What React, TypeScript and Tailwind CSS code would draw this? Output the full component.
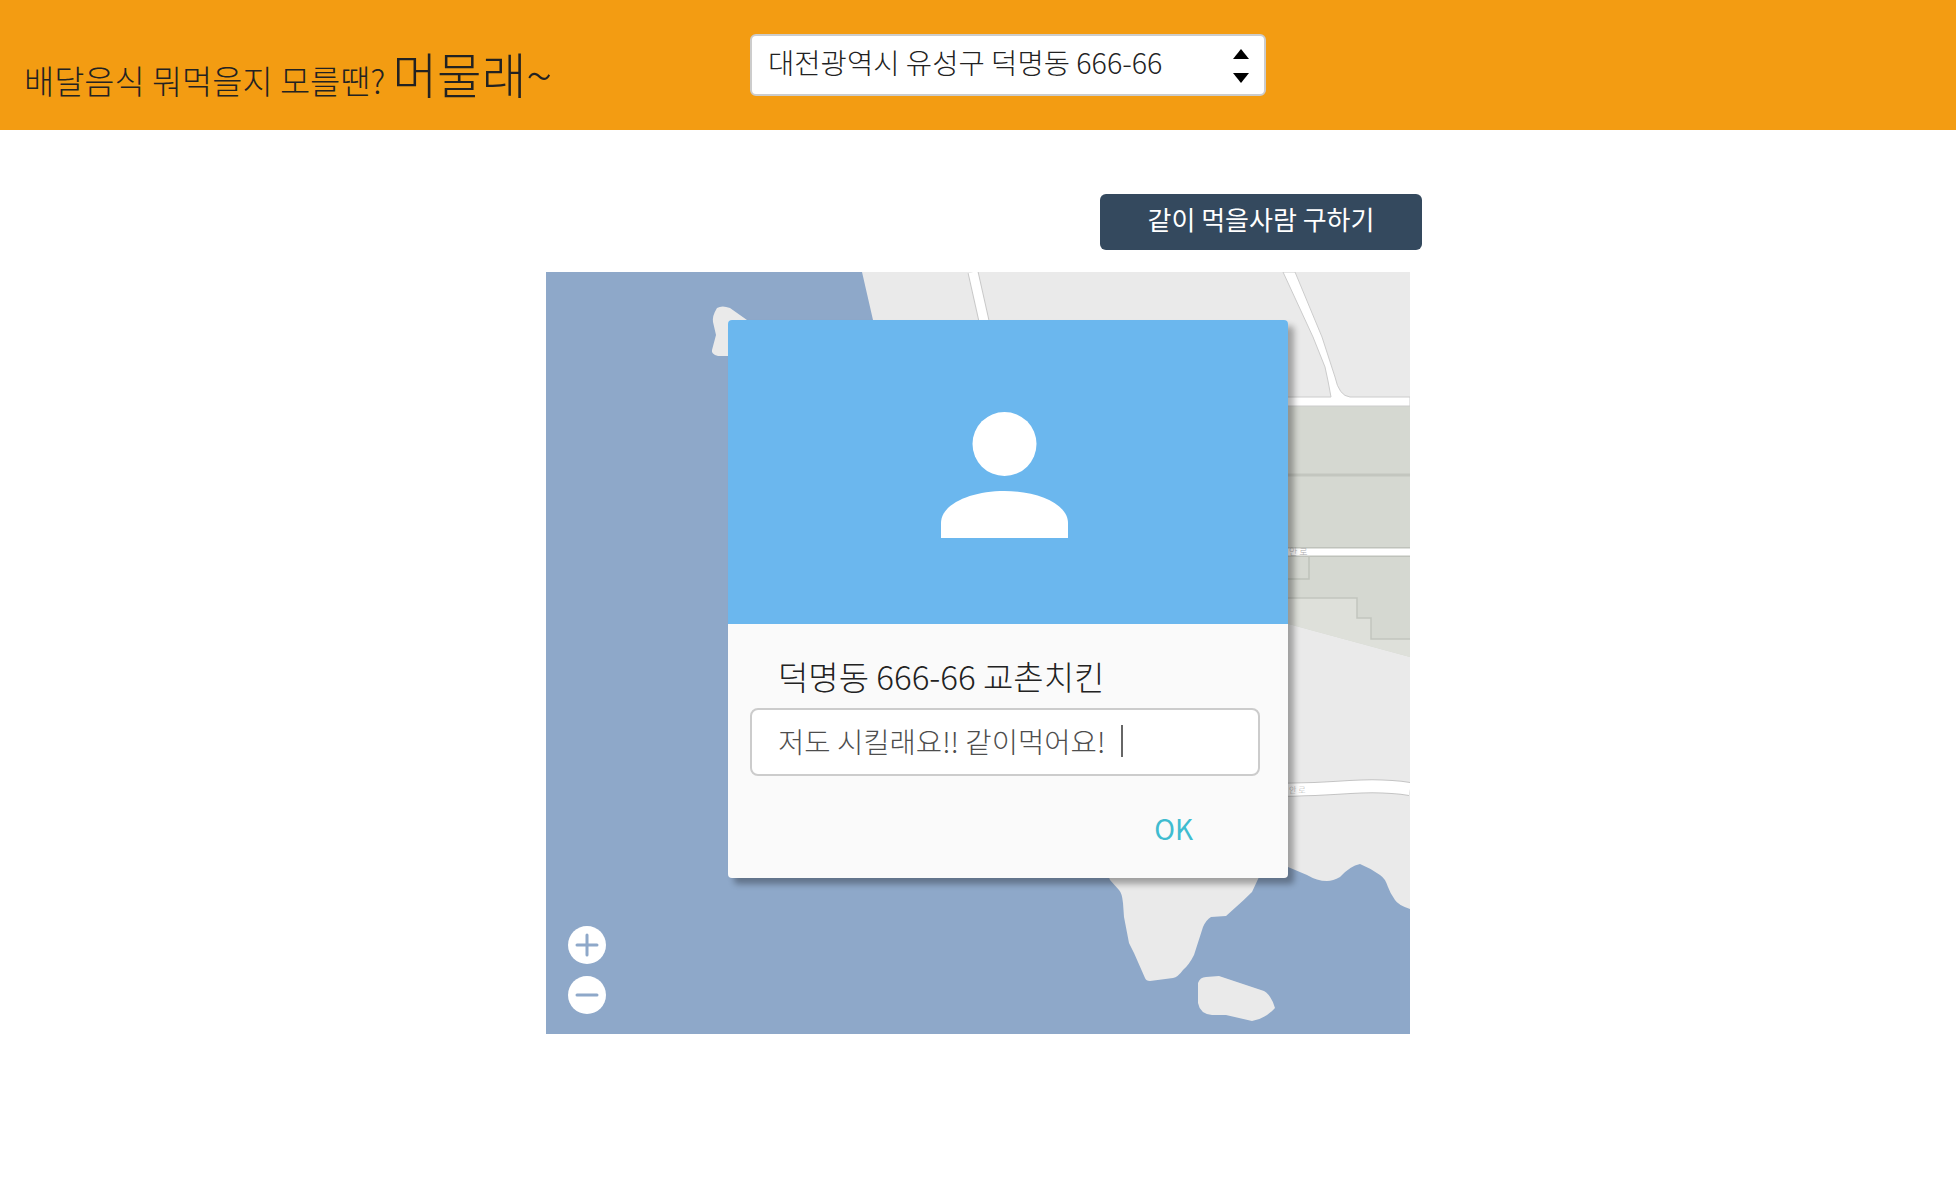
const font = "font-['Noto_Sans_CJK_KR','Noto_Sans',sans-serif]";

function MapCanvas() {
  return (
    <svg className="block h-full w-full" viewBox="546 272 864 762">
      <rect x="546" y="272" width="864" height="762" fill="#8ea8c9" />
      {/* small island, top left */}
      <path
        d="M713 322 Q712 316 717 308 Q722 305 730 308 L747 320 L760 340 L728 356 L718 356 Q711 354 712 350 L716 335 Z"
        fill="#eaeaea"
      />
      {/* mainland */}
      <path
        d="M862 272 L1410 272 L1410 909 Q1398 905 1395 900 Q1390 893 1388 887 Q1385 878 1380 875 Q1370 868 1360 864 Q1350 866 1340 877 Q1333 881 1327 881 Q1317 881 1307 875 L1288 867 L1259 877 L1252 892 Q1244 900 1236 907 L1226 916 L1211 917 Q1206 920 1203 927 L1194 955 Q1189 965 1183 970 Q1178 977 1173 978 L1150 981 Q1146 981 1145 978 L1134 953 L1129 943 L1124 917 L1123 903 Q1122 893 1119 890 L1110 880 L1000 600 L873 320 Z"
        fill="#eaeaea"
      />
      {/* island below the peninsula */}
      <path
        d="M1198 983 Q1200 977 1206 977 L1219 976 L1264 991 Q1271 995 1275 1008 Q1265 1019 1252 1021 L1226 1015 L1212 1015 Q1200 1014 1198 1003 Z"
        fill="#eaeaea"
      />
      {/* green blocks */}
      <path d="M1200 406 L1410 406 L1410 657 L1200 600 Z" fill="#d5d8d1" />
      <path d="M1200 598 L1357 598 L1357 618 L1371 618 L1371 639 L1410 639 L1410 657 L1200 600 Z" fill="#dee0da" />
      <path d="M1200 598 L1357 598 L1357 618 L1371 618 L1371 639 L1410 639" fill="none" stroke="#c2c5be" strokeWidth="1.5" />
      <path d="M1200 475 L1410 475" stroke="#c3c6bf" strokeWidth="3" />
      <path d="M1200 579 L1309 579 L1309 557" fill="none" stroke="#bfc2bb" strokeWidth="1.5" />
      {/* roads */}
      <path d="M973 272 L986 330" stroke="#c8c8c8" strokeWidth="11" />
      <path d="M973 272 L986 330" stroke="#ffffff" strokeWidth="9" />
      <path d="M1200 397 L1331 397 Q1328 380 1325 367 L1313 337 L1283 272 L1295 272 L1322 337 L1335 377 Q1339 396 1350 397 L1410 397 L1410 406 L1200 406 Z" fill="#ffffff" stroke="#cccccc" strokeWidth="1" />
      <path d="M1200 552 L1410 552" stroke="#bfc2bb" strokeWidth="10" />
      <path d="M1200 552 L1410 552" stroke="#ffffff" strokeWidth="7" />
      <path d="M1200 790 Q1300 791 1350 787 Q1385 785 1410 789" fill="none" stroke="#c4c4c4" strokeWidth="14" />
      <path d="M1200 790 Q1300 791 1350 787 Q1385 785 1410 789" fill="none" stroke="#ffffff" strokeWidth="12" />
      <text x="1289" y="555" fontSize="9" fill="#aaaaaa" fontFamily="Noto Sans CJK KR">안 로</text>
      <text x="1289" y="793" fontSize="8" fill="#aaaaaa" fontFamily="Noto Sans CJK KR">안 로</text>
    </svg>
  );
}

function ZoomButton({ plus }: { plus?: boolean }) {
  return (
    <button className="flex h-[38px] w-[38px] items-center justify-center rounded-full bg-white">
      <svg width="24" height="24" viewBox="0 0 24 24" stroke="#8ea8c9" strokeWidth="3" strokeLinecap="round">
        <path d="M2 12 H22" />
        {plus && <path d="M12 2 V22" />}
      </svg>
    </button>
  );
}

export default function App() {
  return (
    <div className={`min-h-[1200px] bg-white font-light text-[#222] ${font}`}>
      <header className="flex h-[130px] bg-[#f39c12]">
        <h1 className="w-[750px] pl-[24px] pt-[44px] text-[32.8px] leading-[58px] font-light whitespace-nowrap">
          배달음식 뭐먹을지 모를땐? <span className="text-[48.5px]">머물래~</span>
        </h1>
        <div className="mt-[34px] flex h-[62px] w-[516px] items-center justify-between rounded-md border-2 border-[#ccc] bg-white pb-[6px] pl-[16px] pr-[15px]">
          <span className="text-[28.6px] leading-none whitespace-nowrap">대전광역시 유성구 덕명동 666-66</span>
          <svg className="mt-[8px]" width="16" height="34" viewBox="0 0 16 34" fill="#000">
            <path d="M8 0 L16 10 H0 Z" />
            <path d="M0 24 H16 L8 34 Z" />
          </svg>
        </div>
      </header>

      <main className="mx-auto w-[864px]">
        <div className="-mr-[12px] mt-[64px] flex justify-end">
          <button className="h-[56px] w-[322px] rounded-md bg-[#34495e] pb-[6px] text-[26px] leading-none font-normal text-white">
            같이 먹을사람 구하기
          </button>
        </div>

        <div className="relative mt-[22px] h-[762px] overflow-hidden">
          <MapCanvas />

          <div className="absolute bottom-[20px] left-[22px] flex flex-col gap-3">
            <ZoomButton plus />
            <ZoomButton />
          </div>

          <div className="absolute left-[182px] top-[48px] w-[560px] overflow-hidden rounded-[4px] bg-[#fafafa] shadow-[6px_6px_6px_rgba(0,0,0,0.32)]">
            <div className="flex h-[304px] items-center justify-center bg-[#6bb7ee] pr-[7px] pt-[5px]">
              <svg width="127" height="126" viewBox="0 0 127 126" fill="#fff">
                <circle cx="63.5" cy="32" r="32" />
                <path d="M0 126 V111 C0 92 30 79 63.5 79 C97 79 127 92 127 111 V126 Z" />
              </svg>
            </div>
            <div className="h-[254px] px-[22px]">
              <h2 className="pl-[28px] pt-[28px] text-[33px] leading-[48px] font-light whitespace-nowrap">
                덕명동 666-66 교촌치킨
              </h2>
              <div className="mt-[8px] flex h-[68px] w-[510px] items-center rounded-lg border-2 border-[#ccc] bg-white pb-[2px] pl-[26px] text-[28.6px] leading-none whitespace-nowrap text-[#4d4d4d]">
                저도 시킬래요!! 같이먹어요!
                <span className="ml-[16px] h-[32px] w-[2px] bg-[#666]" />
              </div>
              <div className="flex justify-end pr-[73px] pt-[30px]">
                <button className="text-[28px] leading-[44px] font-normal text-[#3fbcd0]">OK</button>
              </div>
            </div>
          </div>
        </div>
      </main>
    </div>
  );
}
